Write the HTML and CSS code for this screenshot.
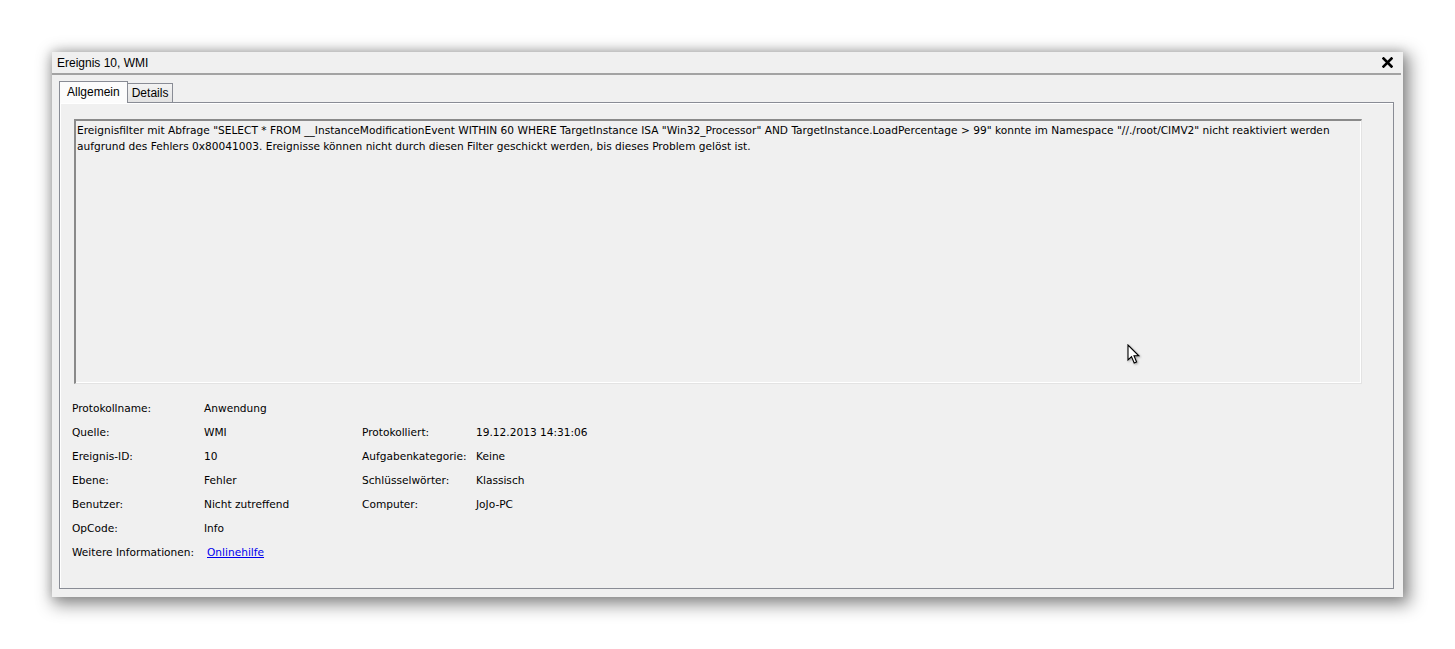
FILE: index.html
```html
<!DOCTYPE html>
<html lang="de">
<head>
<meta charset="utf-8">
<title>Ereignis 10, WMI</title>
<link rel="stylesheet" href="styles.css">
</head>
<body>
<div class="window">
  <div class="titlebar">
    <span class="title">Ereignis 10, WMI</span>
    <svg class="close" width="11" height="11" viewBox="0 0 11 11"><path d="M1.5 1.5 L9.5 9.5 M9.5 1.5 L1.5 9.5" stroke="#000" stroke-width="2.6" stroke-linecap="square"/></svg>
  </div>
  <div class="sep"></div>
  <div class="body">
    <div class="tabstrip">
      <div class="tab active">Allgemein</div>
      <div class="tab">Details</div>
    </div>
    <div class="panel">
      <div class="textbox">Ereignisfilter mit Abfrage "SELECT * FROM __InstanceModificationEvent WITHIN 60 WHERE TargetInstance ISA "Win32_Processor" AND TargetInstance.LoadPercentage &gt; 99" konnte im Namespace "//./root/CIMV2" nicht reaktiviert werden aufgrund des Fehlers 0x80041003. Ereignisse können nicht durch diesen Filter geschickt werden, bis dieses Problem gelöst ist.</div>
      <div class="props">
        <div>Protokollname:</div><div>Anwendung</div><div></div><div></div>
        <div>Quelle:</div><div>WMI</div><div>Protokolliert:</div><div>19.12.2013 14:31:06</div>
        <div>Ereignis-ID:</div><div>10</div><div>Aufgabenkategorie:</div><div>Keine</div>
        <div>Ebene:</div><div>Fehler</div><div>Schlüsselwörter:</div><div>Klassisch</div>
        <div>Benutzer:</div><div>Nicht zutreffend</div><div>Computer:</div><div>JoJo-PC</div>
        <div>OpCode:</div><div>Info</div><div></div><div></div>
        <div>Weitere Informationen:</div><div><a class="link" href="#">Onlinehilfe</a></div><div></div><div></div>
      </div>
    </div>
  </div>
</div>
<svg class="cursor" width="14" height="21" viewBox="0 0 14 21"><path d="M1 1 L1 16 L4.5 12.6 L7.2 19 L9.6 18 L7 11.8 L11.8 11.8 Z" fill="#fff" stroke="#000" stroke-width="1.1" stroke-linejoin="miter"/></svg>
</body>
</html>
```
FILE: styles.css
```css
html, body {
  margin: 0;
  padding: 0;
  background: #ffffff;
}
body {
  padding: 52px 0 0 52px;
  height: 649px;
  box-sizing: border-box;
  position: relative;
  overflow: hidden;
  font-family: "DejaVu Sans", Verdana, sans-serif;
  color: #000;
}
.window {
  width: 1351px;
  height: 545px;
  background: #f0f0f0;
  box-shadow: 4px 5px 16px 3px rgba(0,0,0,0.42), 0 0 10px rgba(0,0,0,0.18);
  display: flex;
  flex-direction: column;
}
.titlebar {
  height: 21px;
  display: flex;
  align-items: center;
  justify-content: space-between;
  padding: 0 10px 0 5px;
  font-family: "Liberation Sans", Arial, sans-serif;
  font-size: 12px;
}
.close {
  display: block;
}
.sep {
  height: 2px;
  background: #a3a3a3;
  margin-right: 2px;
}
.body {
  flex: 1;
  display: flex;
  flex-direction: column;
  padding: 6px 9px 8px 7px;
}
.tabstrip {
  display: flex;
  align-items: flex-end;
  height: 21px;
  position: relative;
  z-index: 1;
  font-family: "Liberation Sans", Arial, sans-serif;
}
.tab {
  font-size: 12px;
  height: 18px;
  line-height: 18px;
  padding: 0 4px;
  border: 1px solid #898c95;
  border-bottom: none;
  background: linear-gradient(#f3f3f3, #e3e3e3);
  border-left: none;
}
.tab.active {
  height: 21px;
  line-height: 20px;
  padding: 0 7px;
  background: #fcfcfc;
  border-left: 1px solid #898c95;
  margin-bottom: -1px;
}
.panel {
  flex: 1;
  border: 1px solid #898c95;
  box-shadow: inset 1px 1px 0 #ffffff;
  padding: 16px 31px 0 12px;
  display: flex;
  flex-direction: column;
}
.textbox {
  margin-left: 2px;
  height: 261px;
  border-top: 2px solid #8a8a8a;
  border-left: 2px solid #8a8a8a;
  border-right: 1px solid #e3e3e3;
  border-bottom: 1px solid #e3e3e3;
  box-shadow: inset -1px -1px 0 #ffffff;
  padding: 1px 1px 0 1px;
  font-size: 10.6px;
  line-height: 16px;
}
.props {
  margin-top: 12px;
  display: grid;
  grid-template-columns: 132px 158px 114px auto;
  grid-auto-rows: 24px;
  align-items: center;
  font-size: 10.6px;
}
.link {
  color: #0000ee;
  text-decoration: underline;
  padding-left: 3px;
}
.cursor {
  position: absolute;
  left: 1127px;
  top: 344px;
  filter: drop-shadow(1px 1px 1px rgba(0,0,0,0.35));
}
```
